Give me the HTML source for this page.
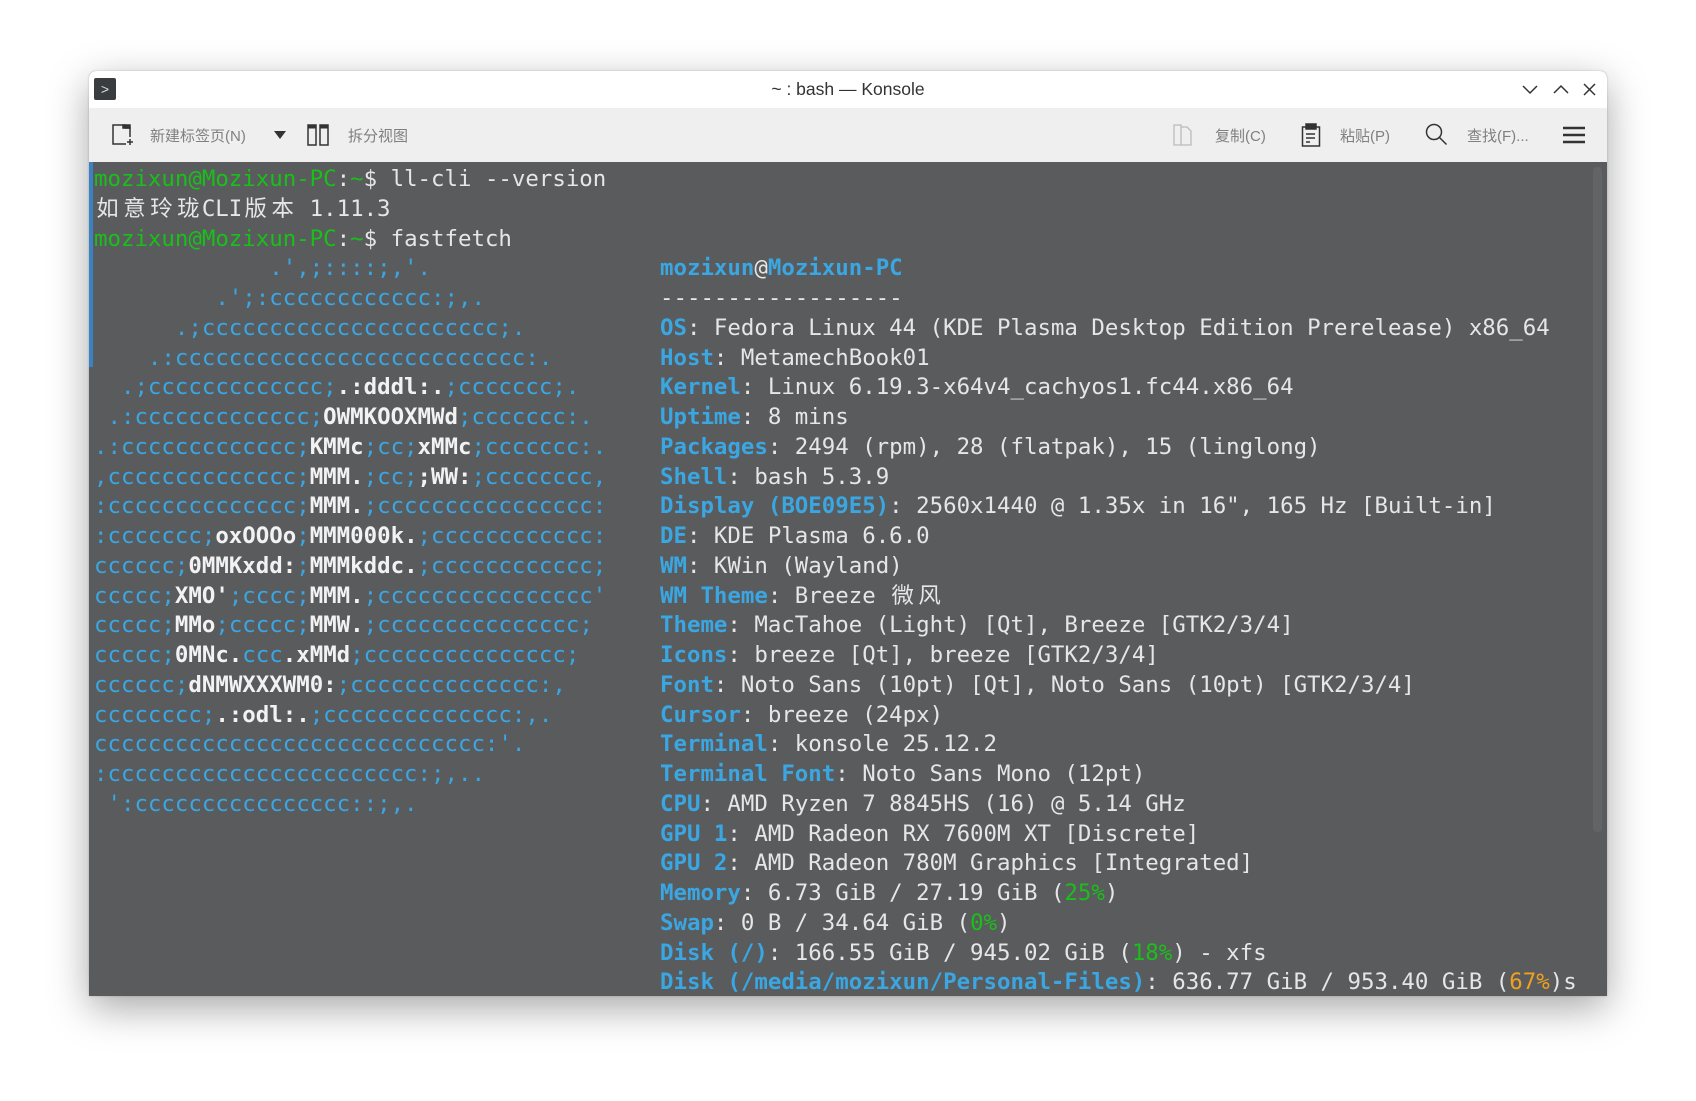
<!DOCTYPE html>
<html><head><meta charset="utf-8"><style>
html,body{margin:0;padding:0;background:#fff;width:1696px;height:1101px;overflow:hidden}
.win{position:absolute;left:89px;top:71px;width:1518px;height:925px;border-radius:7px 7px 0 0;box-shadow:0 12px 40px rgba(0,0,0,.35),0 0 2px rgba(0,0,0,.2);background:#5a5b5d;overflow:hidden}
.title{position:absolute;left:0;top:0;width:100%;height:37px;background:#fff;font:17.5px "Liberation Sans","Noto Sans CJK SC",sans-serif;color:#333;text-align:center;line-height:37px}
.tb{position:absolute;left:0;top:37px;width:100%;height:54px;background:#efefef;border-bottom:1px solid #d8d8d8;font:15px "Liberation Sans","Noto Sans CJK SC",sans-serif;color:#808080}
.tb span{position:absolute;top:17px}
.term{position:absolute;left:0;top:91px;width:100%;bottom:0;background:#5a5b5d}
pre{margin:0;position:absolute;font:22.4px "DejaVu Sans Mono","Noto Sans CJK SC",monospace;line-height:29.75px;color:#e6e6e6;white-space:pre}
.g{color:#19c019}.b{color:#3aa6e2}.bb{color:#3aa6e2;font-weight:bold}.w{color:#f2f2f2;font-weight:bold}.o{color:#f0a020}
.c{display:inline-block;width:26.96px;text-align:center}
</style></head><body>
<div class="win">
 <div class="title">~ : bash — Konsole
  <div style="position:absolute;left:5px;top:7px;width:22px;height:22px;background:#3a3d40;border-radius:2px;color:#ddd;font-size:14px;line-height:22px">&gt;</div>
  <svg style="position:absolute;right:-4px;top:10px" width="90" height="18" viewBox="0 0 90 18" fill="none" stroke="#333" stroke-width="1.5"><path d="M2 5l7 7 7-7"/><path d="M33 12l7-7 7 7"/><path d="M63 3l11 11M74 3L63 14"/></svg>
 </div>
 <div class="tb">
  <svg style="position:absolute;left:22px;top:15px" width="24" height="24" viewBox="0 0 24 24" fill="none" stroke="#333" stroke-width="1.5"><path d="M15 21H2V2h12v3h5v9"/><rect x="12" y="2" width="7" height="3" fill="#333"/><path d="M19 16v6M16 19h6"/></svg>
  <span style="left:61px">新建标签页(N)</span>
  <svg style="position:absolute;left:185px;top:23px" width="12" height="8"><path d="M0 0h12L6 8z" fill="#333"/></svg>
  <svg style="position:absolute;left:218px;top:15px" width="22" height="24" viewBox="0 0 22 24" fill="none" stroke="#333" stroke-width="1.5"><rect x="1" y="2" width="8" height="20"/><rect x="13" y="2" width="8" height="20"/><path d="M1 4h8M13 4h8" stroke-width="3"/></svg>
  <span style="left:259px">拆分视图</span>
  <svg style="position:absolute;left:1084px;top:14px" width="20" height="26" viewBox="0 0 20 26" fill="none" stroke="#bbb" stroke-width="1.3"><path d="M1 3h7v20H1zM8 5h6l4 4v14H8"/></svg>
  <span style="left:1126px">复制(C)</span>
  <svg style="position:absolute;left:1212px;top:14px" width="20" height="26" viewBox="0 0 20 26" fill="none" stroke="#333" stroke-width="1.5"><rect x="1.5" y="5" width="17" height="19"/><rect x="5" y="2" width="10" height="5" fill="#333"/><path d="M5 12h9M5 16h9M5 20h4"/></svg>
  <span style="left:1251px">粘贴(P)</span>
  <svg style="position:absolute;left:1336px;top:15px" width="24" height="24" viewBox="0 0 24 24" fill="none" stroke="#333" stroke-width="1.5"><circle cx="9" cy="9" r="7.5"/><path d="M14.5 14.5l7 7"/></svg>
  <span style="left:1378px">查找(F)...</span>
  <svg style="position:absolute;left:1474px;top:18px" width="22" height="18"><path d="M0 2h22M0 9h22M0 16h22" stroke="#333" stroke-width="2.5"/></svg>
 </div>
 <div class="term">
  <div style="position:absolute;left:0;top:0;width:4px;height:205px;background:#3a82c4"></div>
  <div style="position:absolute;right:5px;top:5px;width:9px;height:665px;background:#636466;border-radius:4px"></div>
<pre style="left:5px;top:3px"><span class="g">mozixun@Mozixun-PC</span>:<span class="g">~</span>$ ll-cli --version
<span class="c">如</span><span class="c">意</span><span class="c">玲</span><span class="c">珑</span>CLI<span class="c">版</span><span class="c">本</span> 1.11.3
<span class="g">mozixun@Mozixun-PC</span>:<span class="g">~</span>$ fastfetch</pre>
<pre style="left:5px;top:92.25px" class="b">             .',;::::;,'.
         .';:cccccccccccc:;,.
      .;cccccccccccccccccccccc;.
    .:cccccccccccccccccccccccccc:.
  .;ccccccccccccc;<span class="w">.:dddl:.</span>;ccccccc;.
 .:ccccccccccccc;<span class="w">OWMKOOXMWd</span>;ccccccc:.
.:ccccccccccccc;<span class="w">KMMc</span>;cc;<span class="w">xMMc</span>;ccccccc:.
,cccccccccccccc;<span class="w">MMM.</span>;cc;<span class="w">;WW:</span>;cccccccc,
:cccccccccccccc;<span class="w">MMM.</span>;cccccccccccccccc:
:ccccccc;<span class="w">oxOOOo</span>;<span class="w">MMM000k.</span>;cccccccccccc:
cccccc;<span class="w">0MMKxdd:</span>;<span class="w">MMMkddc.</span>;cccccccccccc;
ccccc;<span class="w">XMO'</span>;cccc;<span class="w">MMM.</span>;cccccccccccccccc'
ccccc;<span class="w">MMo</span>;ccccc;<span class="w">MMW.</span>;ccccccccccccccc;
ccccc;<span class="w">0MNc.</span>ccc<span class="w">.xMMd</span>;ccccccccccccccc;
cccccc;<span class="w">dNMWXXXWM0:</span>;cccccccccccccc:,
cccccccc;<span class="w">.:odl:.</span>;cccccccccccccc:,.
ccccccccccccccccccccccccccccc:'.
:ccccccccccccccccccccccc:;,..
 ':cccccccccccccccc::;,.</pre>
<pre style="left:571px;top:92.25px"><span class="bb">mozixun</span>@<span class="bb">Mozixun-PC</span>
------------------
<span class="bb">OS</span>: Fedora Linux 44 (KDE Plasma Desktop Edition Prerelease) x86_64
<span class="bb">Host</span>: MetamechBook01
<span class="bb">Kernel</span>: Linux 6.19.3-x64v4_cachyos1.fc44.x86_64
<span class="bb">Uptime</span>: 8 mins
<span class="bb">Packages</span>: 2494 (rpm), 28 (flatpak), 15 (linglong)
<span class="bb">Shell</span>: bash 5.3.9
<span class="bb">Display (BOE09E5)</span>: 2560x1440 @ 1.35x in 16", 165 Hz [Built-in]
<span class="bb">DE</span>: KDE Plasma 6.6.0
<span class="bb">WM</span>: KWin (Wayland)
<span class="bb">WM Theme</span>: Breeze <span class="c">微</span><span class="c">风</span>
<span class="bb">Theme</span>: MacTahoe (Light) [Qt], Breeze [GTK2/3/4]
<span class="bb">Icons</span>: breeze [Qt], breeze [GTK2/3/4]
<span class="bb">Font</span>: Noto Sans (10pt) [Qt], Noto Sans (10pt) [GTK2/3/4]
<span class="bb">Cursor</span>: breeze (24px)
<span class="bb">Terminal</span>: konsole 25.12.2
<span class="bb">Terminal Font</span>: Noto Sans Mono (12pt)
<span class="bb">CPU</span>: AMD Ryzen 7 8845HS (16) @ 5.14 GHz
<span class="bb">GPU 1</span>: AMD Radeon RX 7600M XT [Discrete]
<span class="bb">GPU 2</span>: AMD Radeon 780M Graphics [Integrated]
<span class="bb">Memory</span>: 6.73 GiB / 27.19 GiB (<span class="g">25%</span>)
<span class="bb">Swap</span>: 0 B / 34.64 GiB (<span class="g">0%</span>)
<span class="bb">Disk (/)</span>: 166.55 GiB / 945.02 GiB (<span class="g">18%</span>) - xfs
<span class="bb">Disk (/media/mozixun/Personal-Files)</span>: 636.77 GiB / 953.40 GiB (<span class="o">67%</span>)s</pre>
 </div>
</div>
</body></html>
